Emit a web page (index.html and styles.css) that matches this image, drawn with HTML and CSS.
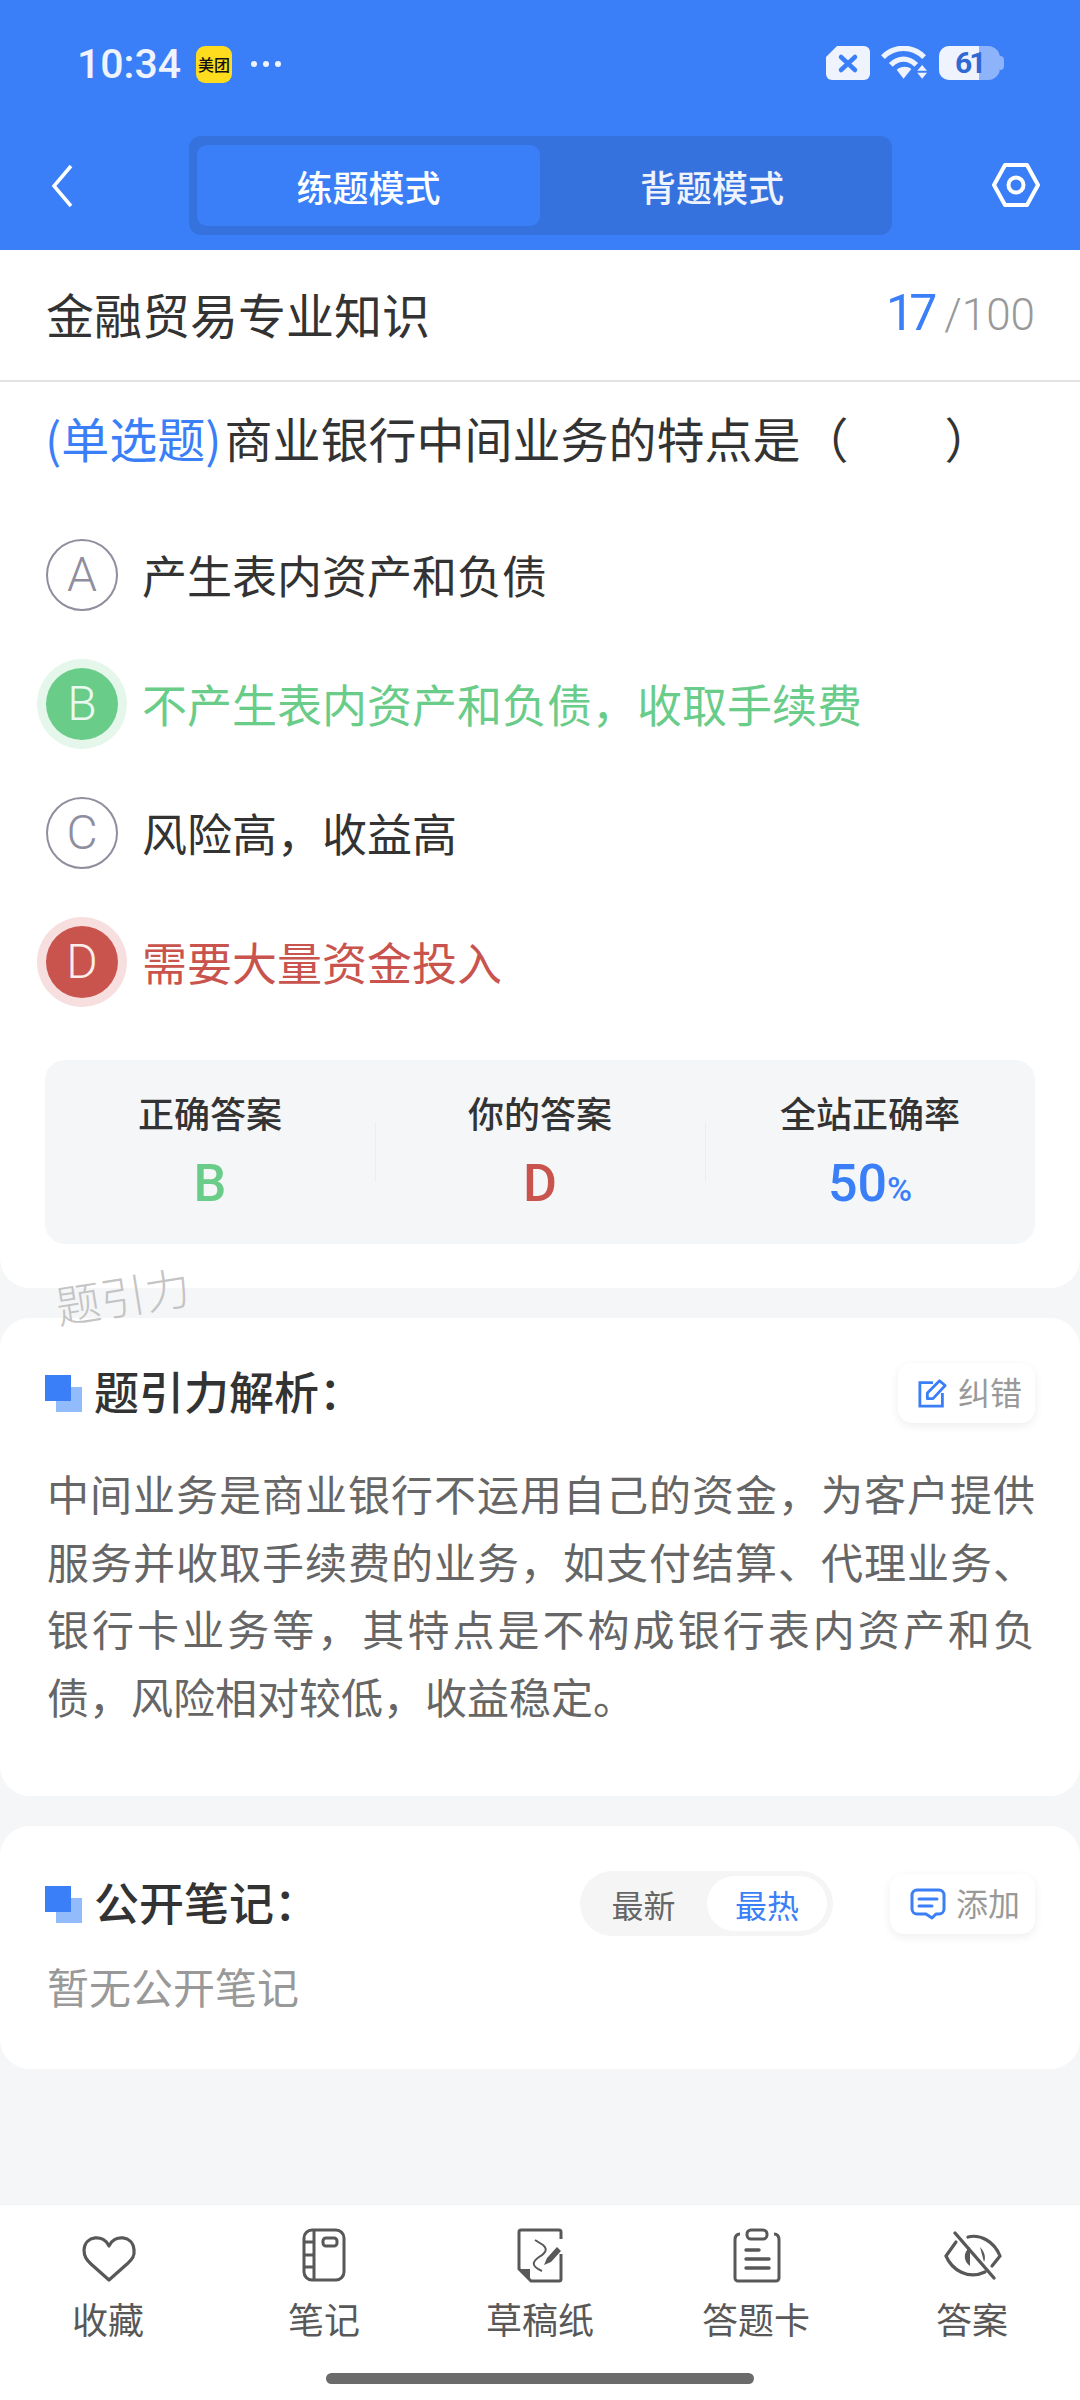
FILE: index.html
```html
<!DOCTYPE html>
<html lang="zh-CN">
<head>
	<meta charset="UTF-8">
	<title>练题模式</title>
	<link rel="stylesheet" href="styles.css">
</head>
<body>
<div class="page">
	<header class="top">
		<div class="status">
			<div class="status-left">
				<span class="time">10:34</span>
				<span class="app-badge"><span class="app-name">美团</span></span>
				<span class="dots"><i></i><i></i><i></i></span>
			</div>
			<div class="status-right">
				<svg class="sim" width="44" height="34" viewBox="0 0 44 34"><path d="M11 0H38a6 6 0 0 1 6 6V28a6 6 0 0 1-6 6H6a6 6 0 0 1-6-6V11z" fill="#eef3fe"/><path d="M15 11L29 24M29 11L15 24" stroke="#3b7ff8" stroke-width="4.5" stroke-linecap="round"/></svg>
				<svg class="wifi" width="47" height="34" viewBox="0 0 48 34"><path d="M2 11C14 -1 32 -1 44 11" fill="none" stroke="#eef3fe" stroke-width="5.5"/><path d="M10 19C18 11 28 11 36 19" fill="none" stroke="#eef3fe" stroke-width="5.5"/><path d="M16 24C20 20 27 20 31 23L23 33z" fill="#eef3fe"/><path d="M42 19L47 25H37zM37 27H47L42 33z" fill="#eef3fe"/></svg>
				<div class="battery">
					<span class="battery-num">61</span>
					<span class="battery-cap"></span>
				</div>
			</div>
		</div>
		<nav class="nav">
			<svg class="back" width="22" height="44" viewBox="0 0 22 44"><path d="M20 2L3 22L20 42" fill="none" stroke="#fff" stroke-width="3.5"/></svg>
			<div class="modes">
				<div class="mode active">练题模式</div>
				<div class="mode">背题模式</div>
			</div>
			<svg class="gear" width="48" height="44" viewBox="0 0 48 44"><path d="M13 2H35L46 22L35 42H13L2 22z" fill="none" stroke="#fff" stroke-width="4" stroke-linejoin="round"/><circle cx="24" cy="22" r="7.5" fill="none" stroke="#fff" stroke-width="4"/></svg>
		</nav>
	</header>

	<main class="main">
		<section class="card question-card">
			<div class="subject">
				<span class="subject-name">金融贸易专业知识</span>
				<span class="count"><b>17</b><em>/</em>100</span>
			</div>
			<p class="question"><span class="qtype">(单选题)</span>商业银行中间业务的特点是（　　）</p>
			<ul class="options">
				<li class="option"><span class="letter">A</span>产生表内资产和负债</li>
				<li class="option right"><span class="letter">B</span>不产生表内资产和负债，收取手续费</li>
				<li class="option"><span class="letter">C</span>风险高，收益高</li>
				<li class="option wrong"><span class="letter">D</span>需要大量资金投入</li>
			</ul>
			<div class="stats">
				<div class="stat">
					<div class="stat-label">正确答案</div>
					<div class="stat-value green">B</div>
				</div>
				<div class="stat">
					<div class="stat-label">你的答案</div>
					<div class="stat-value red">D</div>
				</div>
				<div class="stat">
					<div class="stat-label">全站正确率</div>
					<div class="stat-value blue">50<small>%</small></div>
				</div>
			</div>
		</section>

		<section class="card analysis">
			<div class="sec-head">
				<h2 class="sec-title"><span class="sec-mark"></span>题引力解析：</h2>
				<div class="mini-btn">
					<svg width="30" height="32" viewBox="0 0 32 32"><path d="M16 5H2V30H26V16" fill="none" stroke="#3b7ff8" stroke-width="3"/><path d="M10 22V16L23 3L29 8L16 22z" fill="none" stroke="#3b7ff8" stroke-width="3" stroke-linejoin="round"/></svg>
					<span>纠错</span>
				</div>
			</div>
			<p class="analysis-text">中间业务是商业银行不运用自己的资金，为客户提供服务并收取手续费的业务，如支付结算、代理业务、银行卡业务等，其特点是不构成银行表内资产和负债，风险相对较低，收益稳定。</p>
		</section>

		<section class="card notes">
			<div class="sec-head">
				<h2 class="sec-title"><span class="sec-mark"></span>公开笔记：</h2>
				<div class="sec-tools">
					<div class="sort">
						<span class="sort-item">最新</span>
						<span class="sort-item active">最热</span>
					</div>
					<div class="mini-btn add-btn">
						<svg width="36" height="32" viewBox="0 0 36 32"><path d="M7 2H29a5 5 0 0 1 5 5V21a5 5 0 0 1-5 5H26L22 30L16 26H7a5 5 0 0 1-5-5V7a5 5 0 0 1 5-5z" fill="none" stroke="#3b7ff8" stroke-width="3" stroke-linejoin="round"/><path d="M9 11H27M9 18H22" stroke="#3b7ff8" stroke-width="3" stroke-linecap="round"/></svg>
						<span>添加</span>
					</div>
				</div>
			</div>
			<p class="empty">暂无公开笔记</p>
		</section>

		<div class="watermark">题引力</div>
	</main>

	<footer class="tabbar">
		<div class="tabs">
			<div class="tab">
				<svg width="60" height="60" viewBox="0 0 60 60"><path d="M31 20C26 8 7 9 6 24C6 31 9 34 13 38L31 54L49 38C53 34 57 31 56 24C55 9 36 8 31 20z" fill="none" stroke="#585858" stroke-width="3.2" stroke-linejoin="round"/></svg>
				<span>收藏</span>
			</div>
			<div class="tab">
				<svg width="60" height="60" viewBox="0 0 60 60"><rect x="10" y="4" width="40" height="50" rx="8" fill="none" stroke="#585858" stroke-width="3"/><path d="M20 4V54M10 16H20M10 29H20M10 41H20" stroke="#585858" stroke-width="3"/><rect x="29" y="12" width="14" height="8" rx="3" fill="none" stroke="#585858" stroke-width="3"/></svg>
				<span>笔记</span>
			</div>
			<div class="tab">
				<svg width="60" height="60" viewBox="0 0 60 60"><path d="M51 13V6a2 2 0 0 0-2-2H11a2 2 0 0 0-2 2V43L21 55H49a2 2 0 0 0 2-2V28" fill="none" stroke="#585858" stroke-width="3"/><path d="M10 43H20V54z" fill="#585858"/><path d="M25 14L33 19C39 24 34 28 29 31C22 36 21 40 32 45" fill="none" stroke="#585858" stroke-width="2"/><path d="M34 39L37 32L47 21L51 25L41 36z" fill="#585858"/></svg>
				<span>草稿纸</span>
			</div>
			<div class="tab">
				<svg width="60" height="60" viewBox="0 0 60 60"><path d="M14 8C11 8 9 10 9 14V52a3 3 0 0 0 3 3H50a3 3 0 0 0 3-3V14C53 10 51 8 48 8" fill="none" stroke="#585858" stroke-width="3"/><rect x="21" y="4" width="20" height="9" rx="4" fill="none" stroke="#585858" stroke-width="3"/><path d="M20 24H33M20 33H43M20 42H43" stroke="#585858" stroke-width="3.4" stroke-linecap="round"/></svg>
				<span>答题卡</span>
			</div>
			<div class="tab">
				<svg width="60" height="60" viewBox="0 0 60 60"><path d="M14 16L4 30C10 44 26 54 43 46M26 11C38 8 52 15 58 30L50 40" fill="none" stroke="#585858" stroke-width="3.2" stroke-linecap="round"/><path d="M28 21C21 26 21 35 28 40M38 21C43 26 44 32 42 36z" fill="#585858"/><path d="M13 7L52 52" stroke="#585858" stroke-width="3.4" stroke-linecap="round"/></svg>
				<span>答案</span>
			</div>
		</div>
		<div class="home-bar"></div>
	</footer>
</div>
</body>
</html>
```

FILE: styles.css
```css
*{padding: 0;margin: 0;box-sizing: border-box;}
html,body{width: 1080px;height: 2400px;overflow: hidden;}
body{font-family: "Noto Sans CJK SC", "Noto Sans", sans-serif;background: #f5f6f8;color: #333;}
ul{list-style: none;}
.page{width: 1080px;height: 2400px;display: flex;flex-direction: column;}

/* blue head */
.top{height: 250px;background: #3b7ff8;flex: none;}
.status{height: 136px;padding: 46px 76px 0 77px;display: flex;justify-content: space-between;align-items: flex-start;}
.status-left{display: flex;align-items: center;height: 36px;}
.time{font-family: Roboto, sans-serif;font-size: 41px;font-weight: 500;color: #eef3fe;width: 119px;line-height: 36px;}
.app-badge{width: 36px;height: 37px;background: #ffdc1e;border-radius: 9px;display: flex;align-items: center;justify-content: center;}
.app-name{font-size: 16px;line-height: 18px;color: #111;font-weight: 500;white-space: nowrap;}
.dots{display: flex;gap: 6px;margin-left: 19px;}
.dots i{display: block;width: 6px;height: 6px;border-radius: 50%;background: #eef3fe;}
.status-right{display: flex;align-items: center;gap: 11px;}
.battery{width: 61px;height: 34px;margin-right: 4px;position: relative;background: #8db4fb;border-radius: 10px 12px 12px 10px;}
.battery::before{content: "";position: absolute;left: 0;top: 0;bottom: 0;width: 40px;background: #eef3fe;border-radius: 10px 0 0 10px;}
.battery-num{position: absolute;left: 16px;top: 0;font-family: Roboto, sans-serif;font-size: 30px;line-height: 34px;font-weight: 700;letter-spacing: -3px;color: #3069d4;}
.battery-cap{position: absolute;right: -4px;top: 10px;width: 4px;height: 14px;background: #8db4fb;border-radius: 0 4px 4px 0;}
.nav{height: 114px;display: flex;align-items: flex-start;padding-right: 40px;position: relative;}
.back{margin: 28px 0 0 51px;flex: none;}
.modes{width: 703px;height: 99px;margin-left: 116px;background: #3672de;border-radius: 12px;padding: 9px 8px;display: flex;flex: none;}
.mode{flex: 1;display: flex;align-items: center;justify-content: center;font-size: 36px;font-weight: 500;color: #eef3fe;border-radius: 10px;}
.mode.active{flex: none;width: 343px;background: #3b7ff8;color: #fff;}
.gear{margin: 27px 0 0 100px;flex: none;}

/* body */
.main{flex: 1;position: relative;display: flex;flex-direction: column;gap: 30px;}
.card{background: #fff;border-radius: 30px;padding: 0 45px;}
.question-card{height: 1038px;border-radius: 0 0 30px 30px;padding: 0;}
.subject{height: 132px;border-bottom: 2px solid #e3e3e3;padding: 0 45px 4px 46px;display: flex;align-items: center;justify-content: space-between;}
.subject-name{font-size: 48px;color: #333;}
.count{font-family: Roboto, sans-serif;font-size: 44px;color: #999;display: flex;align-items: baseline;font-weight: 300;}
.count b{font-size: 50px;font-weight: 400;color: #3b7ff8;letter-spacing: -5px;}
.count em{font-style: normal;margin: 0 0 0 12px;}
.question{font-size: 48px;line-height: 60px;padding: 25px 0 0 45px;color: #333;white-space: nowrap;}
.qtype{color: #3b7ff8;margin-right: 3px;}
.options{padding: 43px 45px 0;}
.option{height: 129px;display: flex;align-items: center;font-size: 45px;color: #333;}
.letter{width: 72px;height: 72px;border-radius: 50%;border: 2px solid #8e8e9e;color: #8e8e9e;font-family: Roboto, sans-serif;font-size: 48px;font-weight: 300;display: flex;align-items: center;justify-content: center;margin: 0 24px 0 1px;flex: none;}
.right{color: #69cc88;}
.right .letter{background: #69cc88;border: none;color: #eafaf0;box-shadow: 0 0 0 9px #e5f6ea;}
.wrong{color: #c9544e;}
.wrong .letter{background: #c9544e;border: none;color: #fbeeed;box-shadow: 0 0 0 9px #f6dfde;}
.stats{height: 184px;margin: 34px 45px 0;background: #f5f6f8;border-radius: 20px;display: flex;}
.stat{flex: 1;text-align: center;padding-top: 26px;position: relative;}
.stat + .stat::before{content: "";position: absolute;left: 0;top: 62px;height: 60px;width: 1px;background: #eceef0;}
.stat-label{font-size: 36px;line-height: 52px;font-weight: 500;color: #333;}
.stat-value{font-family: Roboto, sans-serif;font-size: 52px;line-height: 56px;font-weight: 500;margin-top: 18px;}
.stat-value small{font-size: 34px;}
.green{color: #69cc88;}
.red{color: #c9544e;}
.blue{color: #3b7ff8;}

.sec-head{display: flex;justify-content: space-between;align-items: center;}
.sec-title{font-size: 45px;font-weight: 500;color: #333;display: flex;align-items: center;line-height: 60px;position: relative;top: -2px;padding-left: 49px;z-index: 0;}
.sec-mark{position: absolute;left: 0;top: 14px;width: 26px;height: 26px;background: #3b7ff8;}
.sec-mark::before{content: "";position: absolute;left: 11px;top: 12px;width: 26px;height: 25px;background: #91bbfb;z-index: -1;}
.mini-btn{width: 137px;height: 60px;padding: 0 0 0 20px;background: #fff;border-radius: 14px;box-shadow: 0 3px 10px rgba(0,0,0,.07);display: flex;align-items: center;gap: 10px;font-size: 32px;color: #999;}
.mini-btn span{padding-bottom: 4px;}
.add-btn{width: 145px;}
.analysis{height: 478px;padding-top: 45px;}
.analysis-text{font-size: 42px;line-height: 67.5px;color: #666;text-align: justify;margin-top: 36px;padding-left: 2px;}
.notes{height: 243px;padding-top: 45px;}
.sec-tools{display: flex;align-items: center;gap: 57px;}
.sort{width: 253px;height: 65px;background: #f5f5f5;border-radius: 33px;padding: 5px 6px 5px 0;display: flex;align-items: center;}
.sort-item{flex: none;width: 127px;height: 55px;font-size: 32px;color: #666;display: flex;align-items: center;justify-content: center;border-radius: 28px;}
.sort-item.active{width: 120px;background: #fff;color: #3b7ff8;}
.empty{font-size: 42px;line-height: 60px;color: #999;margin-top: 20px;padding-left: 2px;}
.watermark{position: absolute;left: 55px;top: 1018px;font-size: 45px;line-height: 54px;color: #c4c4c4;transform: rotate(-9deg);font-weight: 300;}

/* bottom bar */
.tabbar{height: 196px;background: #fff;border-top: 1px solid #eff0f2;flex: none;position: relative;}
.tabs{display: flex;height: 168px;}
.tab{flex: none;width: 216px;display: flex;flex-direction: column;align-items: center;padding-top: 21px;font-size: 36px;color: #585858;}
.tab span{line-height: 52px;margin-top: 6px;}
.home-bar{width: 428px;height: 11px;background: #6b6b6b;border-radius: 6px;margin: 0 auto;}
```
